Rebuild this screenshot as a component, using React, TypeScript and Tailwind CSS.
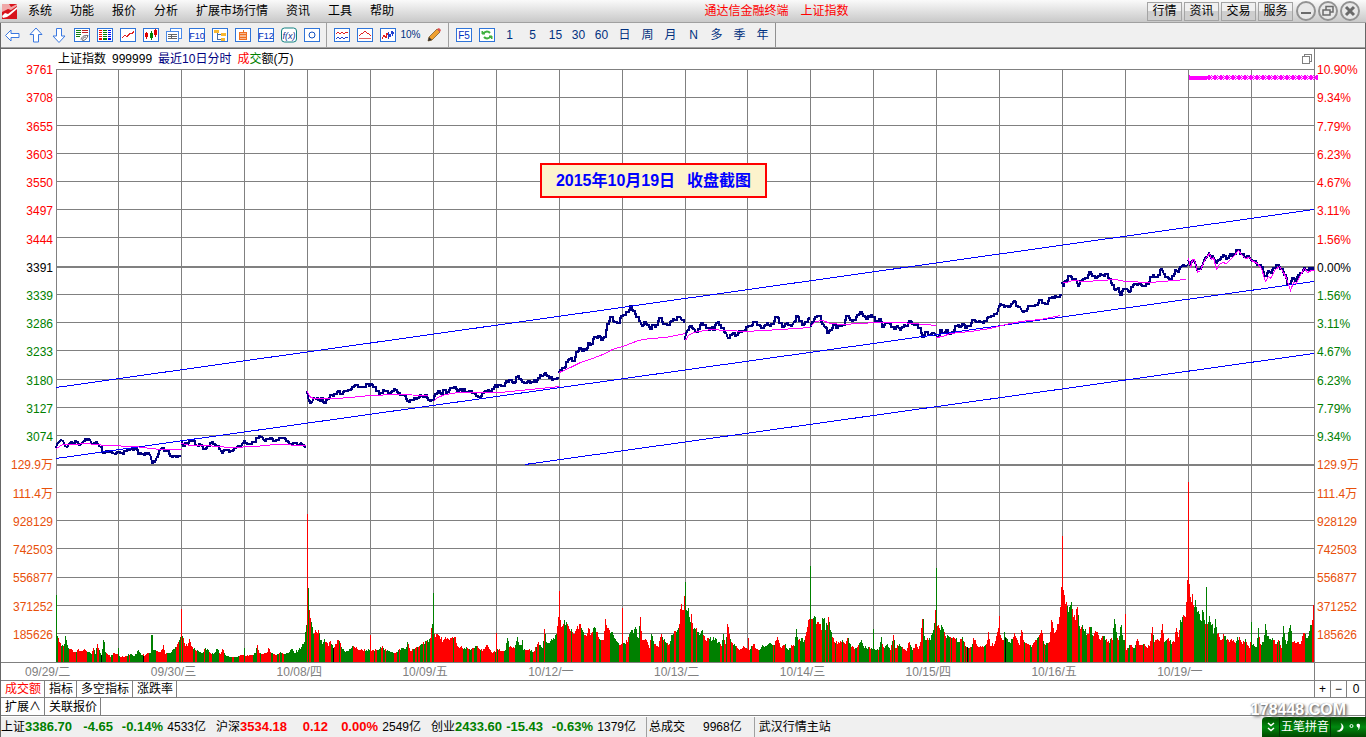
import { ReactNode } from "react";

const menus = ["系统", "功能", "报价", "分析", "扩展市场行情", "资讯", "工具", "帮助"];
const panels = ["行情", "资讯", "交易", "服务"];
const periods = ["1", "5", "15", "30", "60", "日", "周", "月", "N", "多", "季", "年"];
const days = ["09/29/二", "09/30/三", "10/08/四", "10/09/五", "10/12/一", "10/13/二", "10/14/三", "10/15/四", "10/16/五", "10/19/一"];
const prices = ["3761", "3708", "3655", "3603", "3550", "3497", "3444", "3391", "3339", "3286", "3233", "3180", "3127", "3074"];
const percents = ["10.90%", "9.34%", "7.79%", "6.23%", "4.67%", "3.11%", "1.56%", "0.00%", "1.56%", "3.11%", "4.67%", "6.23%", "7.79%", "9.34%"];
const volumes = ["129.9万", "111.4万", "928129", "742503", "556877", "371252", "185626"];

const indices = [
  { name: "上证", price: "3386.70", change: "-4.65", pct: "-0.14%", amount: "4533亿", color: "text-[#008000]" },
  { name: "沪深", price: "3534.18", change: "0.12", pct: "0.00%", amount: "2549亿", color: "text-[#ff0000]" },
  { name: "创业", price: "2433.60", change: "-15.43", pct: "-0.63%", amount: "1379亿", color: "text-[#008000]" },
];

// chart data, in canvas units: x 56..1314, y 69..662
const gridX = [118, 181, 244, 307, 370, 433, 496, 559, 622, 685, 747, 810, 873, 936, 999, 1062, 1125, 1188, 1251];
const gridY = [69, 97, 125, 153, 181, 209, 237, 294, 322, 350, 379, 407, 435, 492, 520, 548, 577, 605, 633];

const priceDays = [
  "56,448 57,444 59,442 61,440 63,441 65,446 67,447 69,444 71,442 74,443 77,442 80,445 82,443 84,441 87,440 90,440 92,444 94,443 97,442 99,446 101,447 104,453 107,451 110,452 113,453 115,454 118,452 122,453 126,451 129,450 132,449 136,449 139,454 143,454 146,453 149,453 151,457 152,463 155,462 157,457 160,450 162,448 165,451 168,451 171,456 174,456 177,457 181,456",
  "181,442 184,446 187,444 190,440 193,441 196,445 198,446 201,445 205,449 208,446 211,443 214,444 217,446 220,449 222,453 225,450 228,450 232,451 236,448 238,446 241,446 243,443 246,443 250,444 254,442 258,438 262,437 264,440 268,439 271,438 274,441 277,440 280,438 284,438 287,441 291,444 295,443 299,445 301,443 303,445 306,447",
  "307,391 309,401 312,402 314,398 316,399 319,400 322,398 325,403 328,399 332,395 336,394 339,391 342,394 346,391 350,390 353,387 357,385 360,387 364,387 368,384 371,384 375,387 378,391 382,393 386,391 390,393 393,391 396,390 399,393 403,395 405,396 408,401 412,400 415,398 418,398 421,395 423,397 426,395 429,400 433,400",
  "433,400 436,394 439,391 442,394 445,390 448,392 452,388 455,387 458,391 461,389 464,389 468,392 471,391 474,393 477,396 480,397 483,393 487,391 490,391 493,389 496,385 500,385 504,386 507,381 511,380 514,383 517,377 520,379 523,382 526,383 529,381 533,382 536,382 539,378 543,376 545,373 548,376 551,377 555,379 559,378",
  "559,373 560,370 564,368 567,362 570,359 574,361 577,352 580,348 583,351 586,350 589,343 592,344 596,337 599,336 602,340 605,337 608,324 612,317 615,322 619,323 622,316 625,315 628,312 631,306 634,311 637,317 640,321 642,326 645,322 648,325 651,329 654,325 657,325 661,318 665,324 669,325 672,321 675,320 680,317 682,320 685,322",
  "685,340 686,333 688,330 691,326 694,329 696,332 699,329 702,323 705,325 708,328 711,328 714,330 717,323 720,325 723,328 726,333 728,338 731,335 734,333 737,335 740,331 744,331 747,327 751,326 755,322 759,325 763,328 766,325 769,325 773,324 777,317 780,323 783,327 786,324 789,325 792,326 794,322 797,316 800,321 803,325 807,322 810,318",
  "810,326 813,322 816,317 820,316 823,324 825,327 828,333 831,330 834,325 837,328 840,326 844,325 848,316 851,320 855,320 858,315 861,312 864,316 867,319 870,317 874,317 877,322 880,319 883,327 886,323 889,323 892,327 895,329 898,326 900,330 903,327 907,326 910,321 913,324 917,325 920,328 923,337 927,332 930,335 934,333 936,336",
  "936,336 938,337 941,330 944,333 947,330 950,334 953,332 957,326 960,327 963,324 966,328 970,326 974,320 978,322 982,322 986,321 989,317 993,316 997,314 999,306 1003,305 1006,306 1009,307 1012,304 1014,301 1017,306 1020,307 1022,311 1026,311 1029,306 1033,306 1037,305 1041,300 1044,303 1047,304 1051,298 1054,298 1058,297 1062,295",
  "1062,282 1063,286 1066,281 1070,276 1073,279 1076,279 1078,286 1081,281 1084,279 1087,278 1090,272 1093,276 1096,278 1099,276 1103,275 1107,274 1110,279 1113,285 1116,290 1118,288 1121,295 1124,289 1127,289 1129,292 1132,287 1136,284 1140,284 1144,286 1148,284 1152,277 1156,277 1159,275 1162,269 1164,274 1167,277 1170,279 1173,276 1176,270 1178,272 1181,267 1183,265 1186,266 1188,265",
  "1188,260 1190,265 1193,261 1195,262 1197,270 1199,269 1202,267 1204,260 1207,257 1209,253 1211,258 1214,258 1216,263 1219,260 1222,257 1225,256 1228,258 1231,254 1235,254 1238,250 1242,254 1246,257 1249,256 1251,260 1255,261 1259,265 1262,267 1266,276 1269,271 1271,273 1274,268 1278,265 1282,269 1285,275 1290,284 1293,278 1296,281 1299,275 1302,273 1304,268 1308,270 1311,269 1314,270",
];

const averageDays = [
  "56,448 59,446 62,444 74,444 85,443 105,445 135,446 150,448 160,449 181,449",
  "181,443 190,445 205,445 230,447 255,446 275,444 306,445",
  "307,391 309,396 313,398 335,398 350,397 370,395 395,394 428,395",
  "433,401 437,397 445,394 458,392 500,392 520,390 559,386",
  "559,372 570,367 580,362 592,358 605,353 612,349 625,345 638,340 650,338 665,337 685,333",
  "685,340 688,335 693,332 710,329 745,331 780,329 810,327",
  "810,326 815,321 822,320 830,323 842,324 860,323 875,322 900,322 936,325",
  "936,337 942,336 950,333 970,331 990,328 1005,324 1020,321 1040,319 1060,315",
  "1062,282 1066,282 1072,280 1085,281 1115,279 1125,281 1150,282 1186,279",
  "1188,258 1190,267 1192,259 1194,259 1197,272 1200,270 1203,262 1206,257 1209,253 1211,259 1213,257 1216,269 1219,264 1222,262 1226,263 1229,260 1233,256 1238,250 1241,254 1245,258 1249,257 1251,260 1257,263 1261,268 1265,281 1268,276 1270,278 1275,269 1279,266 1283,272 1286,278 1290,290 1293,282 1296,283 1299,276 1304,268 1307,272 1311,270 1314,270",
];

const volumeProfile =
  "56,67 57,26 58,24 60,19 62,17 64,18 65,26 66,22 68,14 72,12 75,10 78,13 80,11 84,13 88,10 91,8 93,14 95,8 97,18 98,14 101,7 103,22 104,20 105,10 107,8 110,5 113,9 117,8 118,14 119,6 121,5 126,6 130,8 134,6 138,12 141,7 145,7 148,9 150,9 151,27 152,27 153,12 156,11 160,10 163,17 165,8 170,9 174,13 178,20 180,25 181,53 182,26 184,19 187,16 189,23 191,16 195,12 198,11 202,9 205,14 209,10 213,8 217,13 220,8 222,13 225,7 230,5 236,5 240,7 243,7 244,14 245,6 252,7 255,9 257,17 259,9 263,8 267,10 268,14 271,9 276,7 280,10 285,8 289,10 291,13 294,9 298,12 301,15 304,20 306,37 307,148 308,74 309,52 310,44 312,35 313,28 316,30 318,32 320,22 322,18 324,23 328,16 330,21 333,14 336,18 338,22 341,15 345,10 350,13 353,16 357,13 362,12 369,12 370,27 371,11 378,12 382,16 386,11 392,10 397,10 401,14 405,13 407,20 410,11 414,13 418,15 421,18 425,21 428,20 430,24 431,34 432,38 433,69 434,28 437,28 440,23 443,22 446,23 450,24 453,24 455,25 457,16 460,15 463,13 467,14 470,12 473,14 477,16 480,12 484,13 487,17 489,13 492,9 495,10 496,29 497,13 500,11 505,12 507,24 509,15 514,14 517,25 519,17 521,17 522,22 523,12 528,12 534,11 538,20 542,14 544,33 546,20 548,19 552,22 556,28 558,45 559,71 560,42 561,35 563,38 566,40 568,36 571,33 574,28 576,33 580,38 583,30 586,26 588,34 590,27 593,34 596,30 600,22 603,22 605,43 607,34 611,30 614,24 617,20 621,18 622,54 623,19 627,20 630,30 633,29 635,35 638,24 640,45 642,22 646,22 649,14 651,28 654,18 658,15 661,28 665,20 668,17 672,27 676,30 679,38 681,58 683,52 684,66 685,80 686,52 688,54 690,40 691,48 693,33 697,30 700,28 702,32 705,22 708,24 712,22 715,24 718,20 721,16 723,28 725,18 727,38 729,28 731,20 735,16 739,12 744,15 747,13 748,24 749,12 753,18 758,12 763,16 768,18 773,17 777,25 780,15 785,18 787,13 792,16 794,16 796,33 798,22 801,24 803,20 806,30 808,42 809,43 810,96 811,43 814,46 816,38 818,40 821,32 822,44 824,44 825,32 828,45 830,32 833,24 837,18 842,22 845,18 848,24 851,15 856,14 861,22 864,14 869,15 872,13 873,33 874,13 878,12 881,25 883,15 887,18 890,12 893,27 895,14 899,18 902,15 906,11 909,20 912,12 915,18 918,13 920,20 922,43 923,43 924,26 926,22 930,22 933,32 935,52 936,94 937,36 940,32 942,35 945,26 948,26 951,24 955,23 958,20 962,25 965,16 968,14 971,15 973,24 976,18 979,15 983,15 986,18 988,30 990,16 994,18 998,34 999,46 1000,27 1003,22 1004,30 1006,24 1010,19 1014,29 1017,22 1019,17 1021,32 1024,20 1028,18 1031,15 1034,20 1038,25 1041,32 1044,18 1049,20 1051,42 1053,34 1055,30 1058,38 1060,55 1061,75 1062,126 1063,72 1065,58 1066,60 1068,50 1071,60 1073,45 1075,42 1077,55 1079,36 1083,33 1087,28 1090,35 1093,26 1096,30 1100,22 1103,26 1107,20 1112,22 1114,43 1116,30 1118,22 1121,37 1123,22 1124,22 1125,48 1126,12 1130,17 1134,14 1137,23 1139,17 1143,18 1146,15 1149,16 1152,35 1154,20 1158,22 1160,24 1162,38 1164,20 1168,24 1171,18 1174,20 1176,34 1178,25 1180,42 1182,45 1185,45 1186,60 1187,82 1188,180 1189,78 1191,60 1192,68 1194,55 1195,62 1197,50 1200,42 1203,50 1205,38 1206,75 1207,38 1209,46 1212,38 1213,28 1215,43 1217,28 1221,22 1223,28 1226,22 1230,22 1234,20 1239,25 1242,18 1245,23 1249,14 1250,20 1251,40 1252,17 1256,15 1258,34 1260,18 1263,20 1265,38 1267,26 1269,23 1273,22 1276,18 1278,22 1281,14 1283,36 1286,18 1290,37 1292,20 1297,20 1300,18 1303,29 1307,24 1310,37 1312,42 1313,57";

// from x on: share of the falling (green) bars
const greenShare = [
  [56, 1], [58, 0.15], [64, 0.9], [69, 0.2], [73, 0.55], [85, 0.7], [105, 0.5], [119, 0.2], [130, 0.7], [153, 0.5], [168, 0.85],
  [181, 0], [182, 0.4], [200, 0.6], [222, 0.75], [232, 0.35], [262, 0.3], [280, 0.85], [307, 0], [308, 1], [309, 0.5], [325, 0.35],
  [340, 0.65], [348, 0.3], [362, 0.5], [370, 0], [371, 0.5], [378, 0.7], [400, 0.5], [415, 0.3], [424, 0.7], [433, 1], [434, 0.35],
  [443, 0.6], [452, 0.5], [464, 0.75], [480, 0.4], [496, 0], [497, 0.4], [530, 0.3], [545, 0.7], [557, 0], [560, 0.2], [610, 0.6],
  [620, 0.2], [622, 0], [623, 0.3], [632, 0.85], [641, 0.3], [662, 0.6], [676, 0.4], [685, 1], [686, 0.4], [700, 0.5], [722, 0.7],
  [731, 0.5], [748, 0.2], [757, 0.7], [768, 0.4], [785, 0.5], [805, 0.3], [810, 1], [811, 0.5], [829, 0.3], [850, 0.55], [865, 0.4],
  [873, 1], [874, 0.5], [892, 0.4], [920, 0.7], [936, 1], [937, 0.7], [950, 0.35], [962, 0.5], [978, 0.4], [999, 0], [1000, 0.45],
  [1022, 0.7], [1034, 0.35], [1050, 0.05], [1062, 0], [1063, 0.55], [1080, 0.4], [1095, 0.55], [1106, 0.45], [1113, 0.85], [1125, 0],
  [1126, 0.55], [1135, 0.35], [1150, 0.2], [1187, 0], [1189, 0.5], [1206, 1], [1207, 0.5], [1220, 0.35], [1251, 1], [1252, 0.8],
  [1265, 0.5], [1282, 0.7], [1292, 0.35], [1308, 0.7], [1312, 0],
];

const parse = (s: string) => s.split(" ").map((p) => p.split(",").map(Number));

// small repeatable noise, 0..1
const noise = (n: number) => {
  const v = Math.sin(n * 12.9898) * 43758.5453;
  return v - Math.floor(v);
};

function roughLine(s: string) {
  const pts = parse(s);
  const out: string[] = [];
  pts.forEach(([x, y], i) => {
    out.push(`${x},${y}`);
    const next = pts[i + 1];
    if (next && next[0] - x > 2) {
      const mid = Math.round((y + next[1]) / 2 + (noise(x) - 0.5) * 4);
      out.push(`${x + 1},${y}`, `${x + 1},${mid}`, `${x + 2},${mid}`, `${x + 2},${next[1]}`);
    }
  });
  return out.join(" ");
}

function buildBars() {
  const pts = parse(volumeProfile);
  let red = "";
  let green = "";
  let seg = 0;
  let share = 0;
  let k = 0;
  let isGreen = true;
  let runEnd = 0;
  for (let x = 56; x <= 1313; x++) {
    while (k < pts.length - 2 && pts[k + 1][0] <= x) k++;
    const [x0, h0] = pts[k];
    const [x1, h1] = pts[k + 1];
    const exact = x === x0 || x === x1;
    const base = h0 + ((h1 - h0) * (x - x0)) / (x1 - x0);
    const h = Math.round(exact ? base : base * (0.9 + noise(x) * 0.2));
    let changed = false;
    while (seg < greenShare.length && greenShare[seg][0] <= x) {
      share = greenShare[seg][1];
      seg++;
      changed = true;
    }
    if (changed || x >= runEnd) {
      isGreen = noise(x * 3 + 1) < share;
      runEnd = x + 1 + Math.floor(noise(x + 7) * 3);
    }
    const d = `M${x} 662v-${h}h1v${h}z`;
    if (isGreen) green += d;
    else red += d;
  }
  return { red, green };
}

const bars = buildBars();

function Chart() {
  return (
    <svg className="block h-full w-full overflow-visible" viewBox="56 69 1258 593" preserveAspectRatio="none" shapeRendering="crispEdges">
      <defs>
        <pattern id="marks" x="1207" y="75" width="6" height="5" patternUnits="userSpaceOnUse">
          <path d="M1 0h2v1h1v1h1v1h-1v1h-1v1h-2v-1h-1v-3h1zM4 0h1v1h-1zM5 1h1v1h-1zM5 3h1v1h-1zM4 4h1v1h-1z" fill="#ff00ff" />
        </pattern>
      </defs>
      <g fill="#808080">
        {gridX.map((x) => <rect key={x} x={x} y="69" width="1" height="593" />)}
        {gridY.map((y) => <rect key={y} x="56" y={y} width="1258" height="1" />)}
        <rect x="56" y="266" width="1258" height="2" />
        <rect x="56" y="464" width="1258" height="2" />
        <rect x="56" y="69" width="1" height="593" />
      </g>
      <path d={bars.red} fill="#ff0000" />
      <path d={bars.green} fill="#008000" />
      <path d="M101 662v-7h1v7zM143 662v-6h1v6zM333 662v-14h1v14zM967 662v-15h1v15zM1005 662v-24h1v24z" fill="#000000" />
      <g fill="none">
        <g stroke="#000080" strokeWidth="2">
          {priceDays.map((d) => <polyline key={d} points={roughLine(d)} />)}
        </g>
        <path d="M56 387.5L1314 209.5M56 458.5L1314 281.5M525 464.5L1314 353.5" stroke="#0000ff" />
        <g stroke="#ff00ff" transform="translate(0.5 0.5)">
          {averageDays.map((d) => <polyline key={d} points={d} />)}
        </g>
      </g>
      <rect x="1189" y="76" width="18" height="4" fill="#ff00ff" />
      <rect x="1189" y="75" width="1" height="1" fill="#ff00ff" />
      <rect x="1207" y="75" width="111" height="5" fill="url(#marks)" />
    </svg>
  );
}

function Axis({ labels, className }: { labels: string[]; className: string }) {
  return (
    <div className={`flex flex-col pt-[7px] pb-[13px] text-xs ${className}`}>
      {[...labels, ...volumes].map((label, i) => (
        <div
          key={i}
          className={`flex min-h-0 flex-1 items-center leading-none ${
            i < 7 ? "text-[#ff0000]" : i === 7 ? "text-black" : i < 14 ? "text-[#008000]" : "text-[#e8500a]"
          }`}
        >
          {label}
        </div>
      ))}
    </div>
  );
}

function Tool({ label, children }: { label: string; children: ReactNode }) {
  return (
    <button aria-label={label} className="flex h-full w-[23px] shrink-0 items-center justify-center text-xs text-[#003080]">
      {children}
    </button>
  );
}

function Icon({ boxed = true, children }: { boxed?: boolean; children: ReactNode }) {
  return (
    <svg className="h-4 w-4" viewBox="0 0 16 16" shapeRendering="crispEdges" fill="none">
      {boxed && <rect x="0.5" y="1.5" width="15" height="13" fill="#ffffff" stroke="#2f74d8" />}
      {children}
    </svg>
  );
}

function BoxText({ text }: { text: string }) {
  return (
    <Icon>
      <text x="8" y="12" textAnchor="middle" fontSize={text.length > 2 ? 9 : 10} fill="#0030c0">{text}</text>
    </Icon>
  );
}

function Toolbar() {
  return (
    <div className="flex h-[25px] items-center border-b border-[#a0a0a0] bg-[#f0f0f0]">
      <Tool label="后退">
        <Icon boxed={false}><path d="M0.500 8.500L6 3V6.500H14V10.500H6V14Z" fill="#fff" stroke="#3a78e0" shapeRendering="auto" /></Icon>
      </Tool>
      <Tool label="上一个">
        <Icon boxed={false}><path d="M8 1L2 7.500H5.500V15H10.500V7.500H14Z" fill="#fff" stroke="#3a78e0" shapeRendering="auto" /></Icon>
      </Tool>
      <Tool label="下一个">
        <Icon boxed={false}><path d="M8 15.500L2 9H5.500V1.500H10.500V9H14Z" fill="#fff" stroke="#3a78e0" shapeRendering="auto" /></Icon>
      </Tool>
      <Tool label="自选">
        <Icon>
          <path d="M2 3.500H7M2 5.500H7M2 7.500H7M2 9.500H6" stroke="#108010" />
          <path d="M8 3.500H14M8 5.500H14" stroke="#c02020" />
          <path d="M7 12.500C8 9 11 8 14 8.500C13 11 12 13 9 13.500C7 13.500 9 10 12 10" stroke="#666" shapeRendering="auto" />
        </Icon>
      </Tool>
      <Tool label="行情表">
        <Icon>
          <path d="M2 3h3v1h-3zM2 5h3v1h-3zM2 7h3v1h-3zM2 9h3v1h-3zM2 11h3v2h-3z" fill="#ff0000" />
          <path d="M6 3h4v1h-4zM6 5h4v1h-4zM6 7h4v1h-4zM6 9h4v1h-4zM6 11h4v2h-4z" fill="#008000" />
          <path d="M11 3h3v1h-3zM11 5h3v1h-3zM11 7h3v1h-3zM11 9h3v1h-3zM11 11h3v2h-3z" fill="#0000ff" />
        </Icon>
      </Tool>
      <Tool label="分时图"><Icon><path d="M2 11L5 8L7 9.500L10 6.500H12L14 4.500" stroke="#e02020" /></Icon></Tool>
      <Tool label="K线图">
        <Icon>
          <path d="M3.500 5V12M12.500 2V10" stroke="#e00000" /><path d="M8.500 4V13" stroke="#008000" />
          <rect x="2" y="6" width="3" height="4" fill="#e00000" /><rect x="7" y="6" width="3" height="5" fill="#008000" /><rect x="11" y="3" width="3" height="5" fill="#e00000" />
        </Icon>
      </Tool>
      <Tool label="窗口">
        <Icon boxed={false}>
          <rect x="4.500" y="1.500" width="11" height="10" fill="#fff" stroke="#4a8ae8" />
          <rect x="0.500" y="4.500" width="12" height="10" fill="#fff" stroke="#4a8ae8" />
          <path d="M2 7.500H11M2 9.500H11M2 11.500H11M5.500 7V12" stroke="#666" />
        </Icon>
      </Tool>
      <Tool label="F10"><BoxText text="F10" /></Tool>
      <Tool label="结构">
        <Icon>
          <path d="M5.500 5V12.500H9M5 7.500H9" stroke="#4a6fa8" />
          <path d="M2 3h5v3h-5zM9 6h5v3h-5zM9 11h4v3h-4z" fill="#f8b830" />
        </Icon>
      </Tool>
      <Tool label="自">
        <Icon>
          <path d="M4.500 5.500H11.500V12.500H4.500ZM4 7.500H12M4 10.500H12M8 3V5" stroke="#f07020" />
          <rect x="5" y="6" width="6" height="6" fill="#f07020" opacity="0.500" />
        </Icon>
      </Tool>
      <Tool label="F12"><BoxText text="F12" /></Tool>
      <Tool label="公式">
        <svg className="h-4 w-4" viewBox="0 0 16 16">
          <rect x="0.500" y="1" width="15" height="14" rx="3" fill="#fff" stroke="#108080" />
          <text x="8" y="11.500" textAnchor="middle" fontSize="9" fontStyle="italic" fill="#103090">f(x)</text>
        </svg>
      </Tool>
      <Tool label="圆"><Icon><circle cx="8" cy="8" r="3" stroke="#1050c0" shapeRendering="auto" /></Icon></Tool>
      <div className="mx-[3px] h-full w-px shrink-0 bg-[#a0a0a0]" />
      <Tool label="叠加">
        <Icon><path d="M2 7L4 5L6 7L8 5L10 7L12 5L14 5" stroke="#e02020" /><path d="M2 12L4 10L6 12L8 10L10 12L12 10L14 10" stroke="#2040d0" /></Icon>
      </Tool>
      <Tool label="平滑">
        <Icon><path d="M2 9L5 6H6L8 4L10 6H11L14 9" stroke="#e02020" /><path d="M2 11.500H14" stroke="#e06060" /></Icon>
      </Tool>
      <Tool label="对比">
        <Icon><path d="M2 12L4 8L6 11L7 6L9 10" stroke="#e02020" /><path d="M8 12V5L10 10L12 4V9L14 5" stroke="#2040d0" /></Icon>
      </Tool>
      <Tool label="10%"><span className="text-[10px]">10%</span></Tool>
      <Tool label="画线">
        <svg className="h-4 w-4" viewBox="0 0 16 16">
          <path d="M2 14L3 10L11 2L14 5L6 13Z" fill="#f0a030" stroke="#806030" strokeWidth="0.8" />
          <path d="M2 14L3 10L6 13Z" fill="#303030" /><path d="M11 2L14 5L15 3L13 1Z" fill="#e05050" />
        </svg>
      </Tool>
      <div className="mx-[3px] h-full w-px shrink-0 bg-[#a0a0a0]" />
      <Tool label="F5"><BoxText text="F5" /></Tool>
      <Tool label="刷新">
        <Icon>
          <g shapeRendering="auto" stroke="#40b040" strokeWidth="2">
            <path d="M4 7a4 3.500 0 0 1 7-1M12 9a4 3.500 0 0 1-7 1" />
            <path d="M3 4v3h3zM13 12v-3h-3z" fill="#40b040" strokeWidth="1" />
          </g>
        </Icon>
      </Tool>
      {periods.map((p) => <Tool key={p} label={p}>{p}</Tool>)}
      <div className="ml-px h-full w-px shrink-0 bg-[#909090]" />
    </div>
  );
}

function RoundButton({ label, children }: { label: string; children: ReactNode }) {
  return (
    <button aria-label={label} className="flex h-5 w-5 items-center justify-center rounded-full border-2 border-[#929292] bg-[#e8e8e8]">
      <svg className="h-4 w-4 shrink-0" viewBox="0 0 16 16" fill="none" stroke="#6a6a6a">{children}</svg>
    </button>
  );
}

export default function App() {
  return (
    <div className="relative flex h-screen min-h-[600px] flex-col overflow-hidden bg-white font-['Liberation_Sans','Noto_Sans_CJK_SC',sans-serif] text-xs text-black">
      {/* Menu bar */}
      <header className="flex h-[23px] shrink-0 items-center border-b border-[#a0a0a0] bg-linear-to-b from-[#fafafa] to-[#c9c9c9] pl-[2px]">
        <svg className="h-[15px] w-[15px]" viewBox="0 0 15 15">
          <rect width="15" height="15" fill="#d8141c" />
          <path d="M0 0H7L9 3L15 0V2L9 6L6 5L0 8Z" fill="#f0a8a8" />
          <path d="M0 12L3 9L6 10L15 3V5L8 11L5 13L1 14Z" fill="#fff" />
        </svg>
        <nav className="ml-[11px] flex gap-[18px]">
          {menus.map((m) => <button key={m} className="whitespace-nowrap">{m}</button>)}
        </nav>
        <div className="flex flex-1 justify-center gap-3 pl-3 whitespace-nowrap text-[#ff0000]">
          <span>通达信金融终端</span>
          <span>上证指数</span>
        </div>
        <div className="flex gap-[2px]">
          {panels.map((p) => (
            <button key={p} className="h-[19px] w-[35px] border border-[#a4a4a4] bg-linear-to-b from-[#f0f0f0] from-50% to-[#cecece] to-50% leading-none whitespace-nowrap">
              {p}
            </button>
          ))}
        </div>
        <div className="mr-[6px] ml-[3px] flex gap-[2px]">
          <RoundButton label="最小化"><path d="M3 10H13" strokeWidth="2" /></RoundButton>
          <RoundButton label="还原"><path d="M6 7V3.500H13V9H10M3 7H10V12H3Z" strokeWidth="1.5" /></RoundButton>
          <RoundButton label="关闭"><path d="M4 4L12 12M12 4L4 12" strokeWidth="3" /></RoundButton>
        </div>
      </header>

      <main className="flex min-h-0 flex-1 flex-col border-x border-[#666666]">
        <Toolbar />

        {/* Chart */}
        <section className="flex min-h-0 flex-1 border-t border-b border-t-[#666666] border-b-[#808080]">
          <Axis labels={prices} className="w-[55px] shrink-0 items-end pr-[3px]" />
          <div className="relative flex min-w-0 flex-1 flex-col">
            <div className="flex h-5 shrink-0 items-center gap-[6px] pr-[2px] pl-[2px] whitespace-nowrap">
              <span>上证指数</span>
              <span>999999</span>
              <span className="text-[#000080]">最近10日分时</span>
              <span><span className="text-[#ff0000]">成</span><span className="text-[#008000]">交</span>额(万)</span>
              <button aria-label="窗口" className="ml-auto">
                <svg className="h-[10px] w-[10px]" viewBox="0 0 10 10" fill="none" stroke="#808080" shapeRendering="crispEdges">
                  <path d="M0.500 2.500H7.500V9.500H0.500ZM2.500 2V0.500H9.500V7.500H8" />
                </svg>
              </button>
            </div>
            <div className="min-h-0 flex-1">
              <Chart />
            </div>
            <div className="absolute top-[114px] left-[484px] flex h-[35px] w-[227px] items-center justify-center gap-3 border-2 border-[#ff0000] bg-[#fcf3cc] text-base font-bold whitespace-nowrap text-[#0000ff]">
              <span>2015年10月19日</span>
              <span>收盘截图</span>
            </div>
          </div>
          <Axis labels={percents} className="w-[51px] shrink-0 border-l border-[#808080] pl-[2px]" />
        </section>

        {/* Dates */}
        <div className="flex h-[18px] shrink-0 border-b border-[#808080] text-[#808080]">
          <div className="flex flex-1 items-center pr-[31px] pl-6">
            {days.map((d) => <span key={d} className="flex-1 whitespace-nowrap">{d}</span>)}
          </div>
          <div className="w-[51px] border-l border-[#808080]" />
        </div>

        {/* Indicator tabs */}
        <div className="flex h-[17px] shrink-0 border-b border-[#808080]">
          {["成交额", "指标", "多空指标", "涨跌率"].map((t, i) => (
            <button key={t} className={`border-r border-[#808080] pr-[3px] pl-1 leading-none whitespace-nowrap ${i === 0 ? "text-[#ff0000]" : ""}`}>
              {t}
            </button>
          ))}
          <div className="ml-auto flex w-[51px]">
            <button className="w-4 border-l border-[#808080] leading-none">+</button>
            <button className="w-4 border-l border-[#808080] leading-none">−</button>
            <button className="flex-1 border-l border-[#808080] leading-none">0</button>
          </div>
        </div>
        <div className="flex h-[18px] shrink-0 border-b border-[#808080]">
          <button className="w-11 border-r border-[#808080] pl-1 text-left leading-none whitespace-nowrap">扩展∧</button>
          <button className="border-r border-[#808080] pr-[3px] pl-1 leading-none whitespace-nowrap">关联报价</button>
        </div>

        {/* Status bar */}
        <footer className="flex h-[21px] shrink-0 items-center border-t border-white bg-[#f0f0f0] whitespace-nowrap">
          {indices.map((q) => (
            <div key={q.name} className="mr-[10px] flex items-center">
              <span className="w-6">{q.name}</span>
              <span className={`w-[46px] text-[13px] font-bold ${q.color}`}>{q.price}</span>
              <span className={`w-[42px] text-right text-[13px] font-bold ${q.color}`}>{q.change}</span>
              <span className={`w-[50px] text-right text-[13px] font-bold ${q.color}`}>{q.pct}</span>
              <span className="w-[43px] text-right">{q.amount}</span>
            </div>
          ))}
          <div className="flex h-full items-center border-l border-[#a0a0a0] pr-3 pl-[2px]">
            <span className="mr-[18px]">总成交</span>
            <span>9968亿</span>
          </div>
          <div className="flex h-full items-center border-l border-[#a0a0a0] pl-1">武汉行情主站</div>
        </footer>
      </main>

      {/* Input method bar */}
      <div className="absolute right-0 bottom-0 flex h-5 w-[104px] items-center rounded-tl bg-linear-to-b from-[#004800] via-[#008a10] to-[#004800] text-white">
        <svg className="h-3 w-4" viewBox="0 0 16 12" fill="none" stroke="#fff" strokeWidth="1.5">
          <path d="M6 2L9 4.500L12 2M6 7L9 9.500L12 7" />
        </svg>
        <span className="ml-px flex h-full items-end border-x border-[#003800] px-px pb-[2px] leading-4 whitespace-nowrap">五笔拼音</span>
        <svg className="h-3 flex-1" viewBox="0 0 34 12">
          <path d="M9 2a4.500 4.500 0 1 1-4 8a5 5 0 0 0 4-8" fill="#fff" />
          <circle cx="20" cy="5" r="1.500" fill="none" stroke="#fff" />
          <path d="M25 4a1.800 1.800 0 1 1 3.500 1q0 3-2.500 4.500q1-1.500 1-2.500q-2-1-2-3" fill="#fff" />
        </svg>
      </div>
      <div className="pointer-events-none absolute right-[20px] bottom-[19px] text-base leading-4 font-bold text-white [text-shadow:1px_1px_1px_#777,-1px_0_1px_#aaa,2px_2px_3px_#888]">
        178448.COM
      </div>
    </div>
  );
}
